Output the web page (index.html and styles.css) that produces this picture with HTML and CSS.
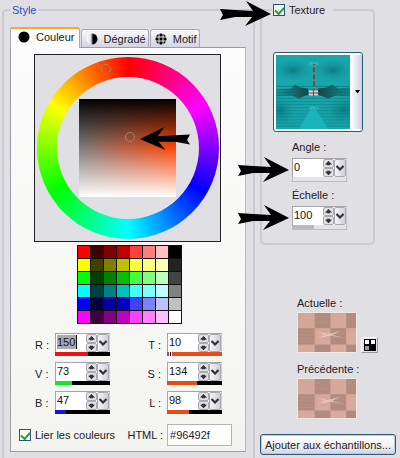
FILE: index.html
```html
<!DOCTYPE html>
<html lang="fr">
<head>
<meta charset="utf-8">
<title>Style et texture</title>
<link rel="stylesheet" href="styles.css">
</head>
<body>
<svg class="defs" aria-hidden="true">
  <defs>
    <symbol id="arrow" viewBox="0 0 52 26"><path d="M1 8 16 9 34 10 27 0 52 13 26 25 33 16 16 16 1 19 4 14Z"/></symbol>
    <symbol id="up" viewBox="0 0 10 8"><path d="M5 1 9 5H1ZM3 5h4v1H3Z"/></symbol>
    <symbol id="down" viewBox="0 0 10 8"><path d="M5 7 9 3H1ZM3 2h4v1H3Z"/></symbol>
    <symbol id="chevron" viewBox="0 0 10 16"><path d="M1.500 6 5 9.500 8.500 6" fill="none" stroke="#333" stroke-width="2.200"/></symbol>
    <linearGradient id="skin" x1="0" y1="0" x2="1" y2="1"><stop offset="0" stop-color="#d2a696"/><stop offset="1" stop-color="#dbac9d"/></linearGradient>
    <symbol id="swatch" viewBox="0 0 59 41" preserveAspectRatio="none">
      <path fill="url(#skin)" d="M0 0h59v41H0z"/>
      <path fill="#b08b7e" d="M17 0h16v16H17zM49 0h10v16H49zM0 16h17v17H0zM33 16h16v17H33zM17 33h16v8H17zM49 33h10v8H49z"/>
      <path stroke="#c99f91" opacity=".4" d="M0 19h59M0 23h17M0 27h59M33 22h16M0 30h17M17 4h16M49 5h10M17 10h16"/>
      <path fill="#ecd0c3" opacity=".7" d="m18 19 12 3 13-3-8 4 12 3-15-2-13 3 8-4z"/>
    </symbol>
  </defs>
</svg>
<main class="dialog">
  <fieldset class="group style-group">
    <legend>Style</legend>
    <div class="tabs" role="tablist">
      <button class="tab active" role="tab" aria-selected="true"><svg width="12" height="12" viewBox="0 0 12 12"><circle cx="6" cy="6" r="5.500"/></svg>Couleur</button>
      <button class="tab gradient-tab" role="tab"><svg width="12" height="12" viewBox="0 0 12 12"><defs><linearGradient id="half"><stop offset="0" stop-color="#fff"/><stop offset=".4" stop-color="#ddd"/><stop offset=".6"/></linearGradient></defs><circle cx="6" cy="6" r="5.500" fill="url(#half)"/></svg>Dégradé</button>
      <button class="tab pattern-tab" role="tab"><svg width="12" height="12" viewBox="0 0 12 12"><circle cx="6" cy="6" r="5.500"/><path d="M4 0v12M8 0v12M0 4h12M0 8h12" stroke="#e8e8f0"/></svg>Motif</button>
    </div>
    <section class="panel" role="tabpanel">
      <div class="picker">
        <div class="wheel"><div class="hole"></div></div>
        <div class="shade"></div>
        <i class="ring hue-mark"></i>
        <i class="ring shade-mark"></i>
        <svg class="shade-arrow" width="51" height="24" viewBox="0 0 52 26" preserveAspectRatio="none"><use href="#arrow" width="52" height="26" transform="matrix(-1 0 0 1 52 0)"/></svg>
      </div>
      <div class="palette">
        <i class="c1"></i><i class="c2"></i><i class="c3"></i><i class="c4"></i><i class="c5"></i><i class="c6"></i><i class="c7"></i><i class="c8"></i>
        <i class="c9"></i><i class="c10"></i><i class="c11"></i><i class="c12"></i><i class="c13"></i><i class="c14"></i><i class="c15"></i><i class="c16"></i>
        <i class="c17"></i><i class="c18"></i><i class="c19"></i><i class="c20"></i><i class="c21"></i><i class="c22"></i><i class="c23"></i><i class="c24"></i>
        <i class="c25"></i><i class="c26"></i><i class="c27"></i><i class="c28"></i><i class="c29"></i><i class="c30"></i><i class="c31"></i><i class="c32"></i>
        <i class="c33"></i><i class="c34"></i><i class="c35"></i><i class="c36"></i><i class="c37"></i><i class="c38"></i><i class="c39"></i><i class="c40"></i>
        <i class="c41"></i><i class="c42"></i><i class="c43"></i><i class="c44"></i><i class="c45"></i><i class="c46"></i><i class="c47"></i><i class="c48"></i>
      </div>
      <div class="channels">
        <label for="r">R :</label>
        <div class="spin"><div class="spin-row"><span class="value"><input id="r" class="selected" value="150"></span><span class="steps"><button aria-label="Plus"><svg><use href="#up"/></svg></button><button aria-label="Moins"><svg><use href="#down"/></svg></button></span><button class="drop" aria-label="Curseur"><svg><use href="#chevron"/></svg></button></div><div class="bar red"><b style="width:60%"></b></div></div>
        <label class="end" for="t">T :</label>
        <div class="spin"><div class="spin-row"><span class="value"><input id="t" value="10"></span><span class="steps"><button aria-label="Plus"><svg><use href="#up"/></svg></button><button aria-label="Moins"><svg><use href="#down"/></svg></button></span><button class="drop" aria-label="Curseur"><svg><use href="#chevron"/></svg></button></div><div class="bar hue"><b style="width:100%"></b></div></div>

        <label for="v">V :</label>
        <div class="spin"><div class="spin-row"><span class="value"><input id="v" value="73"></span><span class="steps"><button aria-label="Plus"><svg><use href="#up"/></svg></button><button aria-label="Moins"><svg><use href="#down"/></svg></button></span><button class="drop" aria-label="Curseur"><svg><use href="#chevron"/></svg></button></div><div class="bar green"><b style="width:30%"></b></div></div>
        <label class="end" for="s">S :</label>
        <div class="spin"><div class="spin-row"><span class="value"><input id="s" value="134"></span><span class="steps"><button aria-label="Plus"><svg><use href="#up"/></svg></button><button aria-label="Moins"><svg><use href="#down"/></svg></button></span><button class="drop" aria-label="Curseur"><svg><use href="#chevron"/></svg></button></div><div class="bar orange"><b style="width:54%"></b></div></div>

        <label for="b">B :</label>
        <div class="spin"><div class="spin-row"><span class="value"><input id="b" value="47"></span><span class="steps"><button aria-label="Plus"><svg><use href="#up"/></svg></button><button aria-label="Moins"><svg><use href="#down"/></svg></button></span><button class="drop" aria-label="Curseur"><svg><use href="#chevron"/></svg></button></div><div class="bar blue"><b style="width:20%"></b></div></div>
        <label class="end" for="l">L :</label>
        <div class="spin"><div class="spin-row"><span class="value"><input id="l" value="98"></span><span class="steps"><button aria-label="Plus"><svg><use href="#up"/></svg></button><button aria-label="Moins"><svg><use href="#down"/></svg></button></span><button class="drop" aria-label="Curseur"><svg><use href="#chevron"/></svg></button></div><div class="bar orange"><b style="width:40%"></b></div></div>
      </div>
      <div class="bottom-row">
        <label class="check"><input type="checkbox" checked>Lier les couleurs</label>
        <label class="html-label" for="html">HTML :</label>
        <input id="html" class="html-input" value="#96492f">
      </div>
    </section>
  </fieldset>

  <aside class="side">
    <fieldset class="group texture-group">
      <legend><label class="check"><input type="checkbox" checked>Texture</label></legend>
      <button class="texture" aria-label="Choisir une texture">
        <svg class="texture-image" viewBox="0 0 74 73" preserveAspectRatio="none">
          <defs>
            <radialGradient id="teal"><stop offset="0" stop-color="#087d82"/><stop offset="1" stop-color="#18a7ad" stop-opacity="0"/></radialGradient>
            <linearGradient id="wingL"><stop offset="0" stop-color="#10666b" stop-opacity="0.300"/><stop offset="1" stop-color="#174440"/></linearGradient>
            <linearGradient id="wingR"><stop offset="0" stop-color="#174440"/><stop offset="1" stop-color="#10666b" stop-opacity="0.500"/></linearGradient>
            <pattern id="lines" width="74" height="3" patternUnits="userSpaceOnUse"><path d="M0 1h74" stroke="#087277" stroke-width="1"/></pattern>
          </defs>
          <path fill="#18a5ab" d="M0 0h74v73H0z"/>
          <ellipse cx="17" cy="15" rx="24" ry="13" fill="url(#teal)"/>
          <ellipse cx="57" cy="15" rx="24" ry="13" fill="url(#teal)"/>
          <ellipse cx="68" cy="54" rx="26" ry="18" fill="url(#teal)"/>
          <ellipse cx="4" cy="55" rx="20" ry="18" fill="url(#teal)"/>
          <path fill="url(#lines)" opacity=".55" d="M0 29h74v42H0z"/>
          <path fill="url(#wingL)" d="M0 34 15 33 19 29 24 32 32 33V39L23 43 15 40 0 41Z"/>
          <path fill="url(#wingR)" d="M42 33 51 32 56 29 62 33 74 32V41L60 40 52 43 42 39Z"/>
          <path fill="#19b9c4" opacity=".8" d="m37 49 15 24H23z"/>
          <path fill="#46c9cd" opacity=".4" d="M33 7h10v3H33zM33 51h10v2H33z"/>
          <path stroke="#684f50" stroke-width="2" d="M38 9v26"/>
          <path stroke="#b9a8a4" stroke-dasharray="2 5" d="M38 10v25"/>
          <path fill="#d8d2d4" d="M33 35h9v5h-9z"/><path stroke="#684850" d="M32 37.500h11M37.500 34v7"/>
        </svg>
        <span class="texture-drop"><svg width="5" height="4" viewBox="0 0 5 4"><path d="M0 0h5L2.500 3.500Z"/></svg></span>
      </button>
      <div class="texture-field">
        <label for="angle">Angle :</label>
        <div class="spin"><div class="spin-row"><span class="value"><input id="angle" value="0"></span><span class="steps"><button aria-label="Plus"><svg><use href="#up"/></svg></button><button aria-label="Moins"><svg><use href="#down"/></svg></button></span><button class="drop" aria-label="Curseur"><svg><use href="#chevron"/></svg></button></div><div class="bar plain"></div></div>
        <svg class="field-arrow"><use href="#arrow"/></svg>
      </div>
      <div class="texture-field">
        <label for="scale">Échelle :</label>
        <div class="spin"><div class="spin-row"><span class="value"><input id="scale" value="100"></span><span class="steps"><button aria-label="Plus"><svg><use href="#up"/></svg></button><button aria-label="Moins"><svg><use href="#down"/></svg></button></span><button class="drop" aria-label="Curseur"><svg><use href="#chevron"/></svg></button></div><div class="bar plain"><b style="width:39%"></b></div></div>
        <svg class="field-arrow"><use href="#arrow"/></svg>
      </div>
      <svg class="texture-arrow"><use href="#arrow"/></svg>
    </fieldset>
    <div class="samples">
      <div class="sample"><span>Actuelle :</span><div class="sample-row"><svg class="swatch"><use href="#swatch"/></svg><button class="mini" aria-label="Matériel uni"><svg width="12" height="12" viewBox="0 0 12 12"><path d="M0 0h12v12H0z"/><path fill="#fff" d="M1 1h4v4H1zM7 1h4v4H7z"/><path fill="#999" d="M1 7h4v4H1z"/></svg></button></div></div>
      <div class="sample"><span>Précédente :</span><svg class="swatch"><use href="#swatch"/></svg></div>
    </div>
    <button class="add">Ajouter aux échantillons...</button>
  </aside>
</main>
</body>
</html>
```
FILE: styles.css
```css
* { box-sizing: border-box; }
body {
  margin: 0;
  background: #e0dfe4;
  color: #222;
  font: 11px/14px "Liberation Sans", Arial, sans-serif;
}
button, input { margin: 0; padding: 0; font: inherit; color: inherit; }
svg { display: block; }
i { display: block; }
.defs { position: absolute; width: 0; height: 0; }

.dialog {
  display: grid;
  grid-template-columns: 253px 1fr;
  column-gap: 5px;
  min-height: 100vh;
  padding: 3px 4px 0 2px;
}
.group {
  min-width: 0;
  margin: 0;
  border: 2px solid #cbcad0;
  border-radius: 5px;
}
.style-group {
  padding: 10px 7px 5px 6px;
  border-bottom: 0;
  border-radius: 5px 5px 0 0;
}
legend { padding: 0 2px; }
.style-group legend { color: #2452b4; }

.tabs { display: flex; align-items: flex-end; gap: 1px; }
.tab {
  display: flex;
  align-items: center;
  height: 18px;
  border: 1px solid #a9aab8;
  border-bottom: 0;
  border-radius: 3px 3px 0 0;
  background: linear-gradient(#fafafd, #d3d3e2);
  white-space: nowrap;
}
.tab.active {
  z-index: 1;
  gap: 6px;
  height: 21px;
  margin-bottom: -1px;
  padding: 0 4px 3px 7px;
  border-top: 2px solid #f3a63a;
  background: #fcfcfc;
}
.gradient-tab, .pattern-tab { gap: 6px; padding: 0 2px 0 4px; }

.panel {
  padding: 6px 0 5px;
  border: 1px solid #9b9ca6;
  border-right-color: #b9bac0;
  background: linear-gradient(#fcfcfd, #f4f4f0);
}
.picker {
  position: relative;
  display: grid;
  place-items: center;
  width: 187px;
  height: 188px;
  margin: 0 auto 0 23px;
  border: 1px solid #222;
  background: #e0dfe4;
}
.picker > * { grid-area: 1 / 1; }
.wheel {
  display: grid;
  place-items: center;
  width: 182px;
  height: 182px;
  border-radius: 50%;
  background: conic-gradient(#f00, #f0f 60deg, #00f 120deg, #0ff 180deg, #0f0 240deg, #ff0 300deg, #f00);
}
.hole { width: 142px; height: 142px; border-radius: 50%; background: #e0dfe4; }
.shade {
  width: 97px;
  height: 98px;
  background:
    linear-gradient(#000, rgba(0,0,0,0) 50%),
    linear-gradient(rgba(255,255,255,0) 50%, #fff),
    linear-gradient(90deg, #7c7c7c, #ff4508);
}
.ring { position: absolute; width: 10px; height: 10px; border: 1px solid #99897a; border-radius: 50%; }
.hue-mark { left: 66px; top: 9px; }
.shade-mark { left: 90px; top: 77px; }
.shade-arrow { position: absolute; left: 105px; top: 72px; }

.palette {
  display: grid;
  grid-template-columns: repeat(8, 12px);
  grid-auto-rows: 12px;
  gap: 1px;
  width: max-content;
  margin: 3px auto 9px 66px;
  border: 1px solid #111;
  background: #111;
}
.c1{background:#f00}.c2{background:#400000}.c3{background:#800000}.c4{background:#c00000}.c5{background:#ff4040}.c6{background:#ff8080}.c7{background:#ffc0c0}.c8{background:#000}
.c9{background:#ff0}.c10{background:#404000}.c11{background:#808000}.c12{background:#c0c000}.c13{background:#ffff40}.c14{background:#ffff80}.c15{background:#ffffc0}.c16{background:#222}
.c17{background:#0f0}.c18{background:#004000}.c19{background:#008000}.c20{background:#00c000}.c21{background:#40ff40}.c22{background:#80ff80}.c23{background:#c0ffc0}.c24{background:#444}
.c25{background:#0ff}.c26{background:#004040}.c27{background:#008080}.c28{background:#00c0c0}.c29{background:#40ffff}.c30{background:#80ffff}.c31{background:#c0ffff}.c32{background:#808080}
.c33{background:#00f}.c34{background:#000040}.c35{background:#0000a0}.c36{background:#0000c0}.c37{background:#4040ff}.c38{background:#8080ff}.c39{background:#c0c0ff}.c40{background:#c0c0c0}
.c41{background:#f0f}.c42{background:#400040}.c43{background:#800080}.c44{background:#c000c0}.c45{background:#ff40ff}.c46{background:#ff80ff}.c47{background:#ffc0ff}.c48{background:#fff}

.channels {
  display: grid;
  grid-template-columns: 20px 54px 52px 54px;
  row-gap: 6px;
  align-items: center;
  padding-left: 24px;
}
.end { text-align: right; }
.channels .end + .spin { margin-left: 6px; }
.spin { width: 55px; }
.spin-row {
  display: flex;
  height: 19px;
  border: 1px solid #a5a5a8;
  border-right-color: #ccc;
  border-bottom: 0;
  background: #fff;
}
.value { flex: 1; min-width: 0; padding: 1px 0 0 1px; }
.value input {
  display: block;
  width: 100%;
  height: 14px;
  border: 0;
  background: none;
  color: #111;
}
.value .selected { width: 20px; border-right: 1px solid #111; background: #a9abb3; }
.steps { display: flex; flex-direction: column; width: 11px; }
.steps button {
  flex: 1;
  min-height: 0;
  border: 1px solid #aaa9b1;
  border-radius: 2px;
  background: #e1e1e7;
}
.steps svg { width: 9px; height: 7px; fill: #333; }
.drop {
  width: 12px;
  border: 1px solid #aaa9b1;
  border-radius: 2px;
  background: linear-gradient(90deg, #f4f4f8, #cfcfd9);
}
.drop svg { width: 10px; height: 16px; }
.bar { height: 4px; background: #000; }
.bar b { display: block; height: 100%; }
.red b { background: #e8151b; }
.green b { background: #12e62b; }
.blue b { background: #1717cf; }
.orange b { background: #e84c16; }
.hue b { background: linear-gradient(90deg, #a34b70 2px, #fff 2px 3px, #111 3px 4px, #fff 4px 5px, #e84c16 5px); }
.plain { height: 5px; border: 1px solid #bdbdc2; border-top: 0; background: #e4e3e8; }
.plain b { background: #b8b9be; }

.bottom-row { display: flex; align-items: center; margin-top: 10px; padding-left: 8px; }
.check { display: flex; align-items: center; gap: 4px; white-space: nowrap; }
.check input {
  appearance: none;
  width: 12px;
  height: 12px;
  border: 1px solid #24567c;
  background: #f6f8f4;
}
.check input::before {
  content: "";
  display: block;
  width: 7px;
  height: 4px;
  margin: 2px 0 0 1px;
  border: solid #27a32b;
  border-width: 0 0 2px 2px;
  transform: rotate(-48deg);
}
.html-label { width: 48px; text-align: right; white-space: nowrap; }
.html-input {
  width: 65px;
  height: 22px;
  margin-left: 4px;
  padding-left: 2px;
  border: 1px solid #b4b4b8;
  background: #fff;
}

.texture-group {
  position: relative;
  width: 115px;
  padding: 35px 10px 7px 11px;
}
.texture-group legend { margin-left: -1px; padding: 0 8px 0 1px; }
.texture {
  display: flex;
  width: 90px;
  height: 80px;
  margin-bottom: 8px;
  padding: 2px 0 2px 2px;
  border: 1px solid #285b7b;
  border-radius: 3px;
  background: #fff;
}
.texture-image { width: 74px; height: 74px; }
.texture-drop {
  display: grid;
  place-items: center;
  align-self: stretch;
  flex: 1;
  margin-left: 2px;
  background: linear-gradient(90deg, #fafaff, #cfcfe0);
}
.texture-field { position: relative; margin: 0 0 6px 19px; }
.texture-field label { display: block; margin-bottom: 4px; }
.field-arrow { position: absolute; left: -55px; bottom: -1px; width: 52px; height: 26px; }
.texture-arrow { position: absolute; left: -43px; top: -16px; width: 52px; height: 26px; }

.samples { display: grid; gap: 9px; margin: 51px 0 15px 37px; }
.sample > span { display: block; margin-bottom: 2px; }
.sample-row { display: flex; align-items: flex-end; gap: 4px; }
.swatch { width: 60px; height: 41px; border: 1px solid #efe9e8; }
.mini {
  display: grid;
  place-items: center;
  width: 17px;
  height: 16px;
  border: 1px solid #fff;
  border-right-color: #999;
  border-bottom-color: #999;
  background: #e4e3e8;
}
.add {
  width: 100%;
  height: 21px;
  border: 1px solid #2a587f;
  border-radius: 3px;
  background: linear-gradient(#fff, #f1f1f5 60%, #cfd0e0);
  box-shadow: inset 0 0 0 1px #b9cde8;
  white-space: nowrap;
}
```
